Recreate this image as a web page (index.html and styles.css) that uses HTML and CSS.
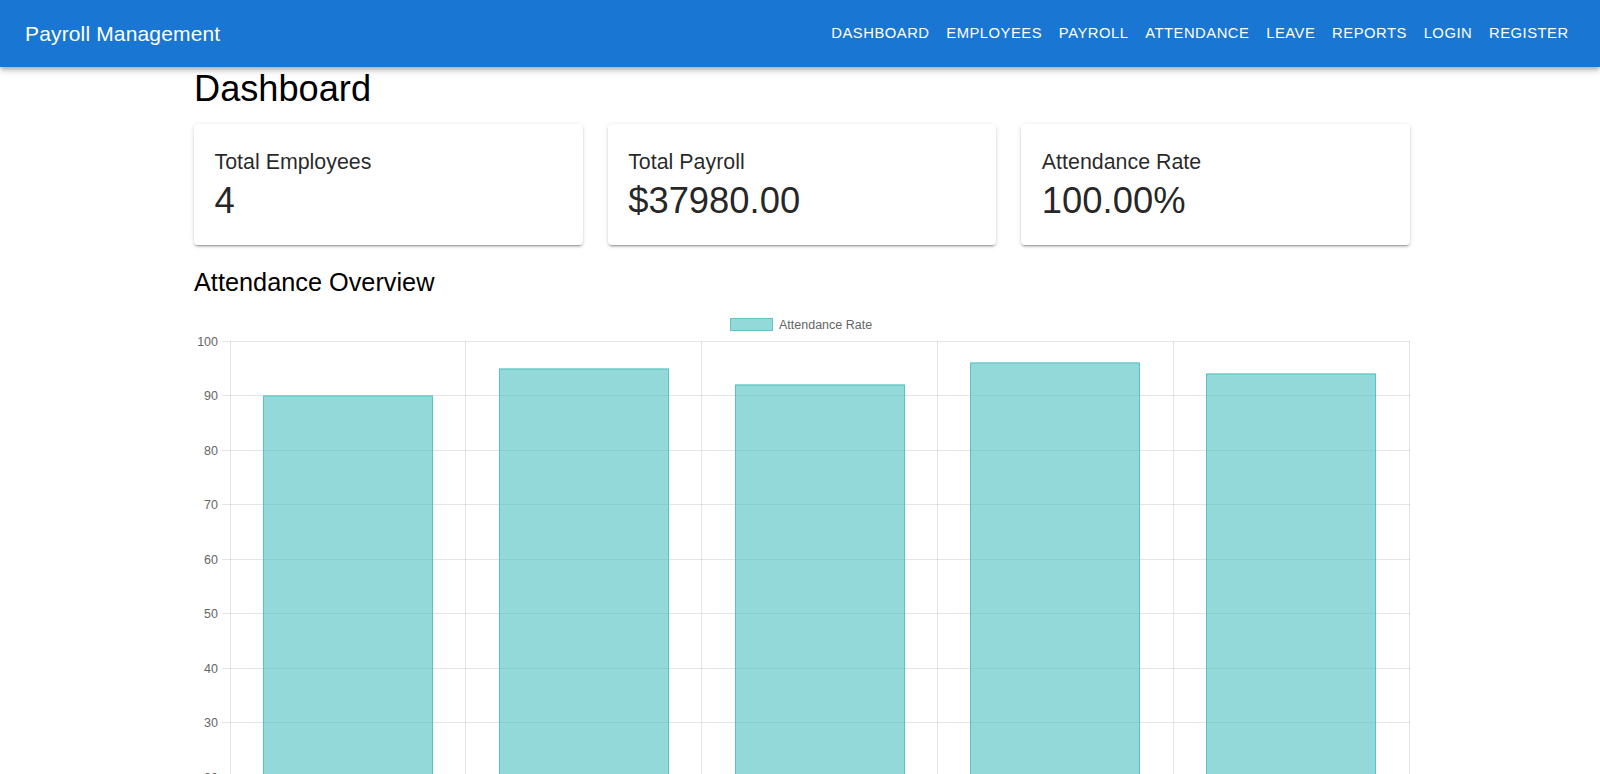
FILE: index.html
```html
<!DOCTYPE html>
<html lang="en">
<head>
<meta charset="utf-8">
<title>Payroll Management</title>
<link rel="stylesheet" href="styles.css">
</head>
<body>
<header class="appbar">
  <div class="brand">Payroll Management</div>
  <nav class="nav">
    <a class="nav-btn">Dashboard</a>
    <a class="nav-btn">Employees</a>
    <a class="nav-btn">Payroll</a>
    <a class="nav-btn">Attendance</a>
    <a class="nav-btn">Leave</a>
    <a class="nav-btn">Reports</a>
    <a class="nav-btn">Login</a>
    <a class="nav-btn">Register</a>
  </nav>
</header>
<main class="container">
  <h1 class="page-title">Dashboard</h1>
  <section class="cards">
    <div class="card">
      <div class="card-label">Total Employees</div>
      <div class="card-value">4</div>
    </div>
    <div class="card">
      <div class="card-label">Total Payroll</div>
      <div class="card-value">$37980.00</div>
    </div>
    <div class="card">
      <div class="card-label">Attendance Rate</div>
      <div class="card-value">100.00%</div>
    </div>
  </section>
  <h2 class="section-title">Attendance Overview</h2>
  <div class="chart">
    <svg class="chart-svg" width="1216" height="475" viewBox="0 0 1216 475" xmlns="http://www.w3.org/2000/svg">
      <!-- legend -->
      <rect x="536.5" y="19.5" width="42" height="12" fill="rgba(75,192,192,0.6)" stroke="rgba(75,192,192,0.85)" stroke-width="1"/>
      <text class="legend-text" x="585" y="30">Attendance Rate</text>

      <!-- grid -->
      <g class="grid" stroke="rgba(0,0,0,0.1)" stroke-width="1" shape-rendering="crispEdges">
        <line x1="28" y1="42.5" x2="1216" y2="42.5"/>
        <line x1="28" y1="96.5" x2="1216" y2="96.5"/>
        <line x1="28" y1="151.5" x2="1216" y2="151.5"/>
        <line x1="28" y1="205.5" x2="1216" y2="205.5"/>
        <line x1="28" y1="260.5" x2="1216" y2="260.5"/>
        <line x1="28" y1="314.5" x2="1216" y2="314.5"/>
        <line x1="28" y1="369.5" x2="1216" y2="369.5"/>
        <line x1="28" y1="423.5" x2="1216" y2="423.5"/>
        <line x1="28" y1="478.5" x2="1216" y2="478.5"/>
        <line x1="36.5" y1="42" x2="36.5" y2="480"/>
        <line x1="271.5" y1="42" x2="271.5" y2="480"/>
        <line x1="507.5" y1="42" x2="507.5" y2="480"/>
        <line x1="743.5" y1="42" x2="743.5" y2="480"/>
        <line x1="979.5" y1="42" x2="979.5" y2="480"/>
        <line x1="1215.5" y1="42" x2="1215.5" y2="480"/>
      </g>

      <!-- y ticks -->
      <g class="ticks">
        <text x="24" y="47">100</text>
        <text x="24" y="101">90</text>
        <text x="24" y="156">80</text>
        <text x="24" y="210">70</text>
        <text x="24" y="265">60</text>
        <text x="24" y="319">50</text>
        <text x="24" y="374">40</text>
        <text x="24" y="428">30</text>
        <text x="24" y="483">20</text>
      </g>

      <!-- bars -->
      <g class="bars">
        <rect x="69" y="96.5" width="170" height="400" fill="rgba(75,192,192,0.6)"/>
        <path d="M69.5 500 V97 H238.5 V500" fill="none" stroke="rgba(75,192,192,0.85)" stroke-width="1"/>
        <rect x="305" y="69.5" width="170" height="430" fill="rgba(75,192,192,0.6)"/>
        <path d="M305.5 500 V70 H474.5 V500" fill="none" stroke="rgba(75,192,192,0.85)" stroke-width="1"/>
        <rect x="541" y="85.5" width="170" height="420" fill="rgba(75,192,192,0.6)"/>
        <path d="M541.5 500 V86 H710.5 V500" fill="none" stroke="rgba(75,192,192,0.85)" stroke-width="1"/>
        <rect x="776" y="63.5" width="170" height="440" fill="rgba(75,192,192,0.6)"/>
        <path d="M776.5 500 V64 H945.5 V500" fill="none" stroke="rgba(75,192,192,0.85)" stroke-width="1"/>
        <rect x="1012" y="74.5" width="170" height="430" fill="rgba(75,192,192,0.6)"/>
        <path d="M1012.5 500 V75 H1181.5 V500" fill="none" stroke="rgba(75,192,192,0.85)" stroke-width="1"/>
      </g>
    </svg>
  </div>
</main>
</body>
</html>
```

FILE: styles.css
```css
html, body {
  margin: 0;
  padding: 0;
  overflow: hidden;
  background: #ffffff;
}

body {
  font-family: "Liberation Sans", Arial, Helvetica, sans-serif;
  color: rgba(0, 0, 0, 0.87);
}

.appbar {
  height: 67px;
  background: #1976d2;
  color: #ffffff;
  display: flex;
  align-items: center;
  justify-content: space-between;
  padding: 0 23px 0 25px;
  box-shadow: 0px 2px 4px -1px rgba(0,0,0,0.2), 0px 4px 5px 0px rgba(0,0,0,0.14), 0px 1px 10px 0px rgba(0,0,0,0.12);
  position: relative;
  z-index: 2;
}

.brand {
  font-size: 21px;
  line-height: 1.6;
  letter-spacing: 0.15px;
}

.nav {
  display: flex;
  align-items: center;
}

.nav-btn {
  font-size: 14.8px;
  letter-spacing: 0.5px;
  text-transform: uppercase;
  padding: 6px 8.4px;
  line-height: 1.75;
  color: #ffffff;
  cursor: pointer;
}

.container {
  width: 1216px;
  margin: 0 0 0 194px;
}

.page-title {
  margin: 0;
  font-size: 36.2px;
  font-weight: 400;
  line-height: 43.7px;
  color: #000000;
}

.cards {
  display: grid;
  grid-template-columns: repeat(3, 1fr);
  gap: 25px;
  margin-top: 13.3px;
}

.card {
  background: #ffffff;
  border-radius: 4px;
  box-shadow: 0px 3px 1px -2px rgba(0,0,0,0.2), 0px 2px 2px 0px rgba(0,0,0,0.14), 0px 1px 5px 0px rgba(0,0,0,0.12);
  padding: 22px 21px 21.5px 20.5px;
  height: 121px;
  box-sizing: border-box;
}

.card-label {
  font-size: 21.4px;
  line-height: 33.3px;
  color: rgba(0, 0, 0, 0.85);
}

.card-value {
  font-size: 36.4px;
  line-height: 43.7px;
  color: rgba(0, 0, 0, 0.87);
}

.section-title {
  margin: 20.7px 0 0 0;
  font-size: 25.3px;
  font-weight: 400;
  line-height: 33.4px;
  color: #000000;
}

.chart {
  height: 475px;
  overflow: hidden;
}

.chart-svg {
  display: block;
}

.legend-text {
  font-family: "Liberation Sans", Arial, sans-serif;
  font-size: 12.5px;
  fill: #666666;
}

.ticks text {
  font-family: "Liberation Sans", Arial, sans-serif;
  font-size: 12.5px;
  fill: #666666;
  text-anchor: end;
}
```
